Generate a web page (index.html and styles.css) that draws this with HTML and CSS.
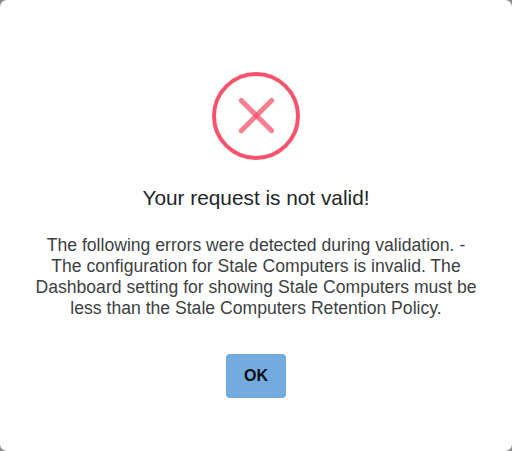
FILE: index.html
```html
<!DOCTYPE html>
<html lang="en">
<head>
<meta charset="utf-8">
<title>Validation error</title>
<link rel="stylesheet" href="styles.css">
</head>
<body>
<div class="dialog" role="alertdialog">
  <svg class="icon" viewBox="0 0 88 88" aria-hidden="true">
    <circle class="ring" cx="44" cy="44" r="42"/>
    <path class="stroke" d="M29.300 28.400 59.600 58.700"/>
    <path class="stroke" d="M59.600 28.400 29.300 58.700"/>
  </svg>
  <h2 class="title">Your request is not valid!</h2>
  <p class="message">The following errors were detected during validation. -<br>The configuration for Stale Computers is invalid. The<br>Dashboard setting for showing Stale Computers must be<br>less than the Stale Computers Retention Policy.</p>
  <button class="ok" type="button">OK</button>
</div>
</body>
</html>
```
FILE: styles.css
```css
body {
  margin: 0;
  background: #8c8c8c;
  font-family: "Liberation Sans", Arial, sans-serif;
}
.dialog {
  box-sizing: border-box;
  height: 451px;
  padding-top: 72px;
  border-radius: 7px;
  background: #fff;
  display: flex;
  flex-direction: column;
  align-items: center;
}
.icon {
  width: 88px;
  height: 88px;
  flex: none;
}
.ring {
  fill: none;
  stroke: #f8536b;
  stroke-width: 4;
}
.stroke {
  stroke: #f8536b;
  stroke-width: 5;
  stroke-linecap: round;
  opacity: 0.75;
}
.title {
  margin: 25px 0 0;
  font-size: 20.8px;
  line-height: 26px;
  font-weight: 400;
  color: #212529;
  white-space: nowrap;
}
.message {
  margin: 24px 0 0;
  font-size: 17.6px;
  line-height: 21px;
  color: #3c3f42;
  text-align: center;
  white-space: nowrap;
}
.ok {
  width: 60px;
  height: 44px;
  margin: 35px 0 0;
  padding: 0;
  border: 0;
  border-radius: 4px;
  background: #74abde;
  color: #080c10;
  font: 700 16px/44px "Liberation Sans", Arial, sans-serif;
}
```
